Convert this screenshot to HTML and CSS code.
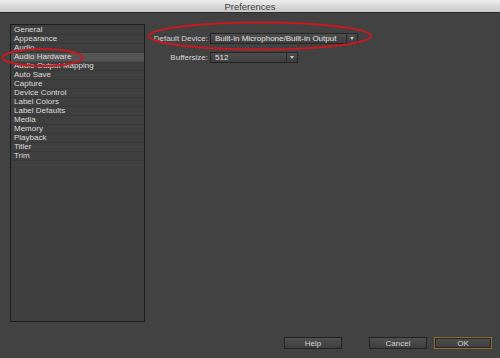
FILE: index.html
```html
<!DOCTYPE html>
<html lang="en">
<head>
    <meta charset="UTF-8">
    <title>Preferences</title>
    <link rel="stylesheet" href="styles.css">
</head>
<body>
    <div class="window">
        <div class="titlebar">Preferences</div>
        <div class="main">
            <ul class="sections">
                <li>General</li>
                <li>Appearance</li>
                <li>Audio</li>
                <li class="current">Audio Hardware</li>
                <li>Audio Output Mapping</li>
                <li>Auto Save</li>
                <li>Capture</li>
                <li>Device Control</li>
                <li>Label Colors</li>
                <li>Label Defaults</li>
                <li>Media</li>
                <li>Memory</li>
                <li>Playback</li>
                <li>Titler</li>
                <li>Trim</li>
            </ul>
            <div class="panel">
                <label class="label">Default Device:</label>
                <div class="select wide"><span class="value">Built-in Microphone/Built-in Output</span><span class="arrow"></span></div>
                <label class="label">Buffersize:</label>
                <div class="select narrow"><span class="value">512</span><span class="arrow"></span></div>
            </div>
        </div>
        <div class="footer">
            <button class="btn help">Help</button>
            <button class="btn">Cancel</button>
            <button class="btn ok">OK</button>
        </div>
        <!-- annotation marks drawn over the screenshot -->
        <svg class="marks" width="500" height="358" viewBox="0 0 500 358">
            <ellipse cx="42.5" cy="57.5" rx="40" ry="8.5"/>
            <ellipse cx="260" cy="36" rx="111" ry="13.5"/>
        </svg>
    </div>
</body>
</html>
```

FILE: styles.css
```css
*{
    margin:0;
    padding:0;
    box-sizing:border-box;
}
body{
    background:#424242;
    font-family:"Liberation Sans", Arial, sans-serif;
    font-size:8px;
    color:#d8d8d8;
}
.window{
    position:relative;
    width:500px;
    height:358px;
    display:flex;
    flex-direction:column;
    background:#424242;
}
.titlebar{
    height:13px;
    line-height:13px;
    text-align:center;
    font-size:9.5px;
    color:#3c3c3c;
    background:linear-gradient(#ececec,#c9c9c9);
    border-bottom:1px solid #2c2c2c;
}
.main{
    display:flex;
    padding:11px 0 0 10px;
}
.sections{
    list-style:none;
    width:135px;
    height:298px;
    border:1px solid #1e1e1e;
    background:#3f3f3f;
    padding-top:1px;
}
.sections li{
    height:9px;
    line-height:8px;
    padding-left:3px;
    border-bottom:1px solid #383838;
    color:#dcdcdc;
    white-space:nowrap;
}
.sections li.current{
    background:#555;
    border-bottom-color:#4a4a4a;
}
.panel{
    display:grid;
    grid-template-columns:58px auto;
    column-gap:2px;
    row-gap:8px;
    align-items:center;
    align-content:start;
    margin-left:5px;
    padding-top:9px;
}
.label{
    text-align:right;
    color:#d8d8d8;
}
.select{
    display:flex;
    height:11px;
    border:1px solid #262626;
    background:linear-gradient(#4d4d4d,#3e3e3e);
    color:#e2e2e2;
}
.select .value{
    flex:1;
    line-height:9px;
    padding-left:4px;
    white-space:nowrap;
    border-right:1px solid #2a2a2a;
}
.select .arrow{
    width:10px;
    position:relative;
}
.select .arrow::after{
    content:"";
    position:absolute;
    left:3px;
    top:3px;
    border-left:2.5px solid transparent;
    border-right:2.5px solid transparent;
    border-top:3px solid #c8c8c8;
}
.select.wide{
    width:148px;
}
.select.narrow{
    width:88px;
}
.footer{
    display:flex;
    justify-content:flex-end;
    padding:15px 8px 0 0;
}
.btn{
    width:58px;
    height:12px;
    font-family:"Liberation Sans", Arial, sans-serif;
    font-size:8px;
    color:#d4d4d4;
    background:linear-gradient(#505050,#3e3e3e);
    border:1px solid #232323;
    margin-left:7px;
}
.btn.help{
    margin-right:20px;
}
.btn.ok{
    border-color:#8a6d2a;
    box-shadow:inset 0 0 0 1px #2c2a22;
}
.marks{
    position:absolute;
    left:0;
    top:0;
    pointer-events:none;
}
.marks ellipse{
    fill:none;
    stroke:#c81a20;
    stroke-width:2;
}
```
